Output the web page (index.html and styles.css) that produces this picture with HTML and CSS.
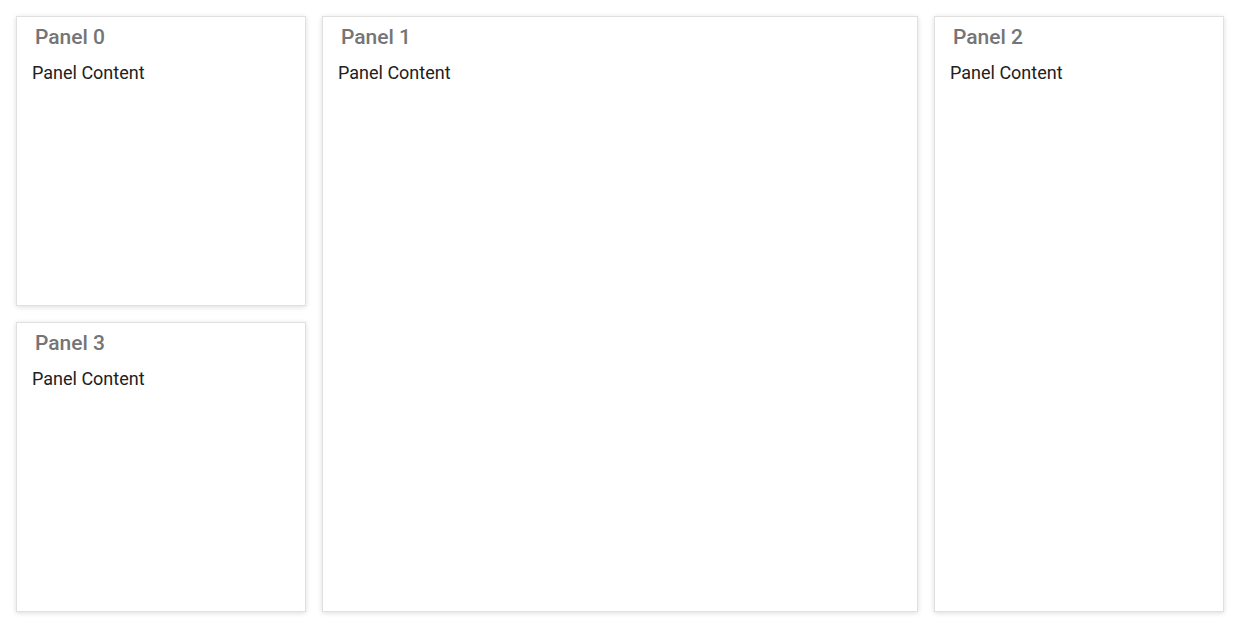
FILE: index.html
```html
<!DOCTYPE html>
<html>
<head>
<meta charset="utf-8">
<link rel="stylesheet" href="styles.css">
</head>
<body>
<div class="dashboard">
  <div class="col col-side">
    <div class="panel">
      <div class="panel-header">Panel 0</div>
      <div class="panel-content">Panel Content</div>
    </div>
    <div class="panel">
      <div class="panel-header">Panel 3</div>
      <div class="panel-content">Panel Content</div>
    </div>
  </div>
  <div class="col col-main">
    <div class="panel">
      <div class="panel-header">Panel 1</div>
      <div class="panel-content">Panel Content</div>
    </div>
  </div>
  <div class="col col-side">
    <div class="panel">
      <div class="panel-header">Panel 2</div>
      <div class="panel-content">Panel Content</div>
    </div>
  </div>
</div>
</body>
</html>
```
FILE: styles.css
```css
html, body {
  margin: 0;
  padding: 0;
  background: #fff;
  font-family: Roboto, "Noto Sans", sans-serif;
  overflow: hidden;
}
.dashboard {
  display: flex;
  gap: 16px;
  padding: 16px;
  height: 596px;
}
.col {
  display: flex;
  flex-direction: column;
  gap: 16px;
  flex-shrink: 0;
}
.col-side {
  width: 290px;
}
.col-main {
  width: 596px;
}
.panel {
  flex: 1;
  box-sizing: border-box;
  background: #fff;
  border: 1px solid #e0e0e0;
  box-shadow: 0 1px 5px rgba(0, 0, 0, 0.14);
}
.panel-header {
  padding: 8px 0 0 18px;
  font-size: 21px;
  font-weight: 500;
  color: #757575;
  line-height: 24px;
}
.panel-content {
  padding: 13px 15px 0;
  font-size: 18px;
  color: #212121;
  line-height: 22px;
}
```
